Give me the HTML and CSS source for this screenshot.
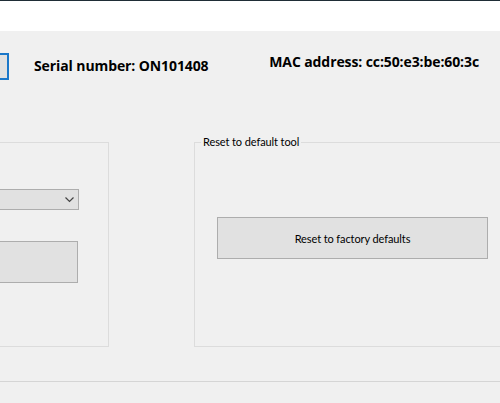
FILE: index.html
```html
<!DOCTYPE html>
<html lang="en">
<head>
  <meta charset="UTF-8">
  <meta name="viewport" content="width=device-width, initial-scale=1.0">
  <title>Device Tools</title>
  <link rel="stylesheet" href="styles.css">
</head>
<body>
  <div class="titlebar"></div>

  <div class="info">
    <div class="focus-box"></div>
    <span class="serial">Serial number: ON101408</span>
    <span class="mac">MAC address: cc:50:e3:be:60:3c</span>
  </div>

  <div class="groups">
    <div class="group group-left">
      <div class="dropdown">
        <svg width="9" height="6" viewBox="0 0 9 6">
          <polyline points="0.5,0.5 4.5,4.5 8.5,0.5" fill="none" stroke="#444" stroke-width="1.2"/>
        </svg>
      </div>
      <button class="btn btn-left"></button>
    </div>

    <fieldset class="group group-right">
      <legend>Reset to default tool</legend>
      <button class="btn btn-reset">Reset to factory defaults</button>
    </fieldset>
  </div>

  <div class="footer"></div>
</body>
</html>
```

FILE: styles.css
```css
html, body {
  margin: 0;
  padding: 0;
}
body {
  width: 500px;
  height: 403px;
  overflow: hidden;
  background-color: #f0f0f0;
  font-family: "Open Sans", "Noto Sans", sans-serif;
  color: #000;
}
.titlebar {
  height: 30px;
  background: #fff;
  border-top: 1px solid #1f2d36;
}
.info {
  display: flex;
  align-items: flex-start;
  height: 27px;
  margin-top: 22px;
}
.focus-box {
  flex-shrink: 0;
  width: 30px;
  height: 27px;
  margin-left: -21px;
  box-sizing: border-box;
  border: 2px solid #1a77c9;
  background: #e1e1e1;
}
.serial, .mac {
  font-weight: bold;
  font-size: 14px;
  line-height: 18px;
  white-space: nowrap;
}
.serial {
  margin-left: 25px;
  margin-top: 4px;
  letter-spacing: -0.1px;
}
.mac {
  margin-left: auto;
  margin-right: 21px;
  margin-top: 0;
  letter-spacing: -0.1px;
}
.groups {
  display: flex;
  align-items: flex-start;
  margin-top: 54px;
}
.group {
  flex-shrink: 0;
  box-sizing: border-box;
  border: 1px solid #dcdcdc;
}
.group-left {
  width: 149px;
  height: 205px;
  margin-left: -40px;
  margin-top: 8px;
  padding: 46px 0 0 10px;
}
.dropdown {
  width: 108px;
  height: 21px;
  box-sizing: border-box;
  border: 1px solid #adadad;
  background: #e1e1e1;
  display: flex;
  align-items: center;
  justify-content: flex-end;
  padding-right: 4px;
}
.btn {
  display: block;
  box-sizing: border-box;
  border: 1px solid #adadad;
  background: #e1e1e1;
  font-family: Lato, "Open Sans", sans-serif;
  font-size: 11px;
  letter-spacing: -0.1px;
  color: #000;
  padding: 0;
}
.btn-left {
  width: 107px;
  height: 42px;
  margin-top: 31px;
}
.group-right {
  width: 320px;
  min-width: 0;
  margin: 0 0 0 85px;
  padding: 0;
}
.group-right legend {
  margin-left: 6px;
  padding: 0 2px;
  font-family: Lato, "Open Sans", sans-serif;
  font-size: 11px;
  letter-spacing: -0.1px;
  line-height: 16px;
}
.btn-reset {
  width: 271px;
  height: 42px;
  margin: 67px 0 87px 22px;
}
.footer {
  margin-top: 34px;
  height: 21px;
  border-top: 1px solid #d5d5d5;
  border-bottom: 1px solid #e3f0fa;
}
```
